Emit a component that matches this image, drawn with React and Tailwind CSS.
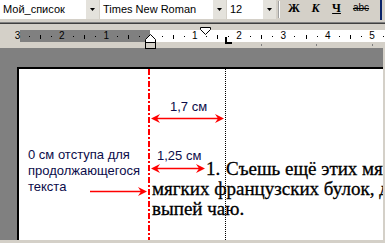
import React from "react";

const CM = 44.3;
const ORIGIN = 150.5;

function DropBtn() {
  return (
    <div className="w-[13px] h-[19px] bg-[#e4e2dc] flex items-center justify-center">
      <svg width="5" height="3" viewBox="0 0 5 3"><polygon points="0,0 5,0 2.5,3" fill="#000" /></svg>
    </div>
  );
}

function Ruler() {
  const nums = [];
  const ticks = [];
  for (let n = -4; n <= 6; n++) {
    const x0 = ORIGIN + n * CM;
    if (n !== 0) nums.push({ x: x0, label: String(Math.abs(n)) });
    ticks.push({ x: x0 + CM / 4, t: "d" });
    ticks.push({ x: x0 + CM / 2, t: "l" });
    ticks.push({ x: x0 + (3 * CM) / 4, t: "d" });
  }
  return (
    <div className="relative h-[12px] w-full">
      <div className="absolute left-[20px] top-0 h-[12px] w-[130px] bg-[#808080]" />
      <div className="absolute left-[150px] top-0 h-[12px] right-0 bg-white" />
      {ticks.filter(t => t.x > 20 && t.x < 385 && Math.abs(t.x - 150) > 3).map((t, i) => (
        <div
          key={i}
          className={t.t === "d" ? "absolute top-[6px] w-[1px] h-[1px] bg-black" : "absolute top-[5px] w-[1px] h-[4px] bg-black"}
          style={{ left: Math.round(t.x) }}
        />
      ))}
      {nums.filter(n => n.x > 10 && n.x < 385).map((n, i) => (
        <span
          key={i}
          className="absolute top-[1px] text-[10px] leading-[10px] text-black font-['Liberation_Sans',Arial,sans-serif] -translate-x-1/2"
          style={{ left: n.x }}
        >
          {n.label}
        </span>
      ))}
      <svg className="absolute left-[200px] top-[-3px]" width="11" height="8" viewBox="0 0 11 8">
        <polygon points="0.5,0.5 10.5,0.5 10.5,2.5 5.5,7.5 0.5,2.5" fill="#fff" stroke="#000" strokeWidth="1" />
      </svg>
      <svg className="absolute left-[145px] top-[4px]" width="11" height="15" viewBox="0 0 11 15">
        <polygon points="5.5,0.5 10.5,5.5 10.5,8.5 0.5,8.5 0.5,5.5" fill="#fff" stroke="#000" strokeWidth="1" />
        <rect x="0.5" y="8.5" width="10" height="6" fill="#d4d0c8" stroke="#000" strokeWidth="1" />
      </svg>
      <svg className="absolute left-[225px] top-[7px]" width="7" height="7" viewBox="0 0 7 7">
        <rect x="0" y="0" width="2" height="7" fill="#000" />
        <rect x="0" y="5" width="7" height="2" fill="#000" />
      </svg>
    </div>
  );
}

function Arrow({ x1, x2, y, both }) {
  const h = (tx, dir) => {
    const b = tx - dir * 9;
    const m = tx - dir * 6;
    return `${tx},${y} ${b},${y - 4.5} ${m},${y} ${b},${y + 4.5}`;
  };
  return (
    <g>
      <line x1={both ? x1 + 6 : x1} y1={y} x2={x2 - 6} y2={y} stroke="#ff0000" strokeWidth="1.3" />
      {both && <polygon points={h(x1, -1)} fill="#ff0000" />}
      <polygon points={h(x2, 1)} fill="#ff0000" />
    </g>
  );
}

export default function App() {
  const ui = "font-['Liberation_Sans',Arial,sans-serif]";
  return (
    <div className={`w-[385px] h-[243px] bg-[#d4d0c8] flex flex-col overflow-hidden ${ui}`}>
      <div className="h-[19px] flex items-start relative">
        <div className="w-[86px] h-[19px] bg-white text-[11px] leading-[19px] pl-[3px] text-black">Мой_список</div>
        <DropBtn />
        <div className="w-[1px]" />
        <div className="w-[113px] h-[19px] bg-white text-[11px] leading-[19px] pl-[3px] text-black whitespace-nowrap">Times New Roman</div>
        <DropBtn />
        <div className="w-[1px]" />
        <div className="w-[36px] h-[19px] bg-white text-[11px] leading-[19px] pl-[3px] text-black">12</div>
        <DropBtn />
        <div className="ml-[2px] mt-[1px] h-[17px] w-[1px] bg-[#a0a0a0]" />
        <div className="mt-[1px] h-[17px] w-[1px] bg-white" />
        <div className="ml-[8px] w-[11px] text-center font-['Liberation_Serif',serif] font-bold text-[12px] leading-[16px]">Ж</div>
        <div className="ml-[11px] w-[11px] text-center font-['Liberation_Serif',serif] font-bold italic text-[12px] leading-[16px]">К</div>
        <div className="ml-[11px] w-[9px] text-center font-['Liberation_Serif',serif] font-bold underline text-[12px] leading-[16px]">Ч</div>
        <div className="ml-[11px] w-[18px] text-center text-[10px] leading-[16px] line-through">abc</div>
        <div className="ml-[10px] w-[2px] h-[20px] bg-[#0a246a]" />
      </div>
      <div className="h-[3px]" />
      <div className="h-[1px] bg-[#808080]" />
      <div className="h-[1px] bg-[#404040]" />
      <div className="h-[6px]" />
      <Ruler />
      <div className="h-[6px] relative">
        <div className="absolute left-[261px] top-[2px] w-[1px] h-[2px] bg-[#808080]" />
        <div className="absolute left-[316px] top-[2px] w-[1px] h-[2px] bg-[#808080]" />
        <div className="absolute left-[372px] top-[2px] w-[1px] h-[2px] bg-[#808080]" />
      </div>
      <div className="flex-1 bg-[#808080] pl-[17px] pt-[19px] border-r-2 border-b-[3px] border-[#d4d0c8] flex min-h-0">
        <div className="flex-1 bg-white border-l-2 border-t-2 border-black relative overflow-hidden">
          <div className="pt-[90px] pl-[133px] font-['Liberation_Serif','Times_New_Roman',serif] text-[19px] leading-[20px] text-black whitespace-nowrap [-webkit-text-stroke:0.3px_black]">
            <div className="ml-[54px]"><span className="inline-block w-[20px]">1.</span>Съешь ещё этих мягких</div>
            <div>мягких французских булок, да</div>
            <div>выпей чаю.</div>
          </div>
          <svg className="absolute left-0 top-0" width="366" height="175" viewBox="0 0 366 175">
            <line x1="130" y1="0" x2="130" y2="175" stroke="#ff0000" strokeWidth="2" strokeDasharray="6 2 2 2" />
            <line x1="206.5" y1="0" x2="206.5" y2="175" stroke="#000" strokeWidth="1" strokeDasharray="1 1" />
            <Arrow x1={132} x2={205} y={49.5} both />
            <Arrow x1={132} x2={186} y={99.5} both />
            <Arrow x1={71} x2={128} y={122.5} />
          </svg>
          <div className="absolute left-[151px] top-[30px] text-[13px] leading-[15px] text-[#0c0c4a]">1,7 см</div>
          <div className="absolute left-[138px] top-[79px] text-[13px] leading-[15px] text-[#0c0c4a]">1,25 см</div>
          <div className="absolute left-[9px] top-[78px] text-[13px] leading-[16px] text-[#0c0c4a]">
            0 см отступа для<br />продолжающегося<br />текста
          </div>
        </div>
      </div>
    </div>
  );
}
